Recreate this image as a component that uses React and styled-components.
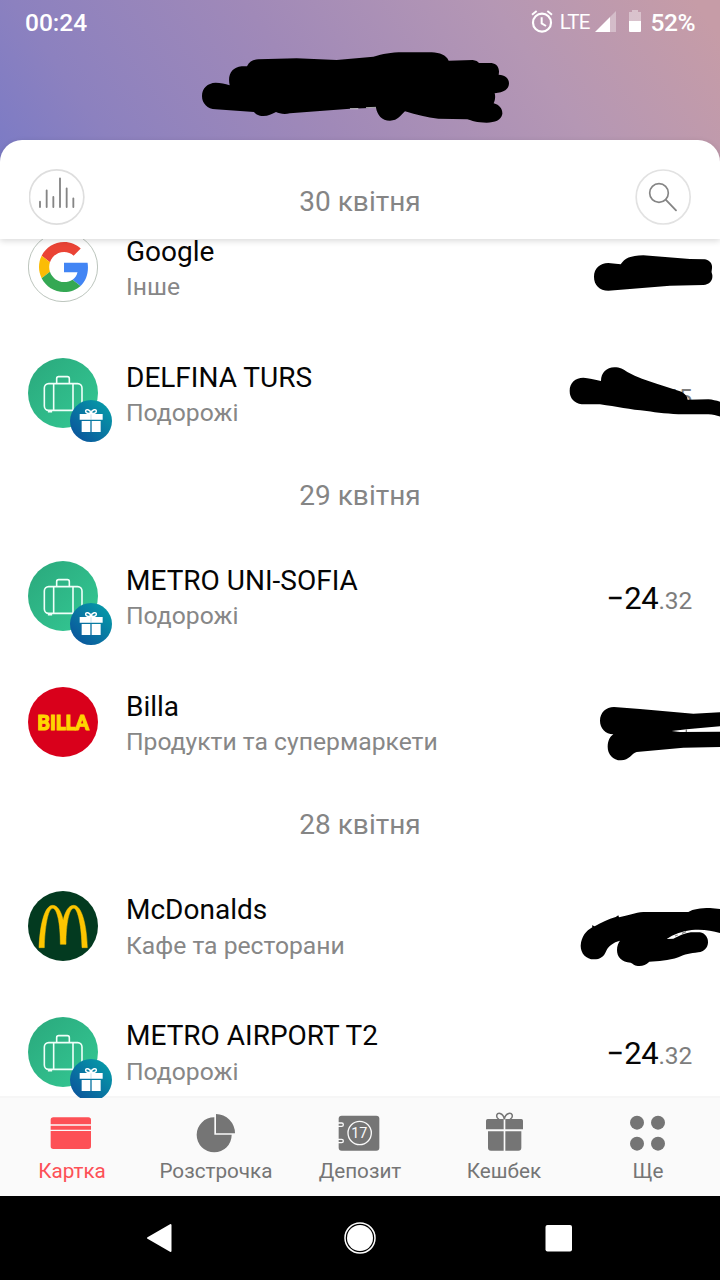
import React from 'react';
import styled, { createGlobalStyle } from 'styled-components';

const GlobalStyle = createGlobalStyle`
  body {
    margin: 0;
    background: #fff;
    font-family: Roboto, 'Noto Sans', sans-serif;
  }
`

const Screen = styled.div`
  position: relative;
  display: flex;
  flex-direction: column;
  width: 720px;
  height: 1280px;
  overflow: hidden;
  background: #fff;
`

const Header = styled.header`
  height: 239px;
  flex: none;
  display: flex;
  flex-direction: column;
  justify-content: space-between;
  background: linear-gradient(55deg, #7c7bc5 3%, #8c81bf 17%, #a089b8 44%, #b597b4 73%, #c69ca7 97%);
  background-size: 720px 190px;
  background-repeat: no-repeat;
`

const StatusBar = styled.div`
  display: flex;
  justify-content: space-between;
  align-items: center;
  height: 44px;
  padding: 0 25px;
  color: #fff;
`

const StatusText = styled.span`
  font-size: 24.5px;
  font-weight: 500;
  line-height: 45px;
`

const StatusIcons = styled.div`
  display: flex;
  align-items: center;
`

const Network = styled.span`
  margin: 0 5px 0 7px;
  font-size: 20.5px;
  letter-spacing: -0.8px;
  line-height: 42px;
`

const Signal = styled.svg`
  margin-right: 12px;
`

const Battery = styled.svg`
  margin-right: 9px;
`

const Percent = styled(StatusText)`
  letter-spacing: -0.5px;
`

const Toolbar = styled.div`
  position: relative;
  z-index: 2;
  display: flex;
  justify-content: space-between;
  align-items: center;
  box-sizing: border-box;
  height: 99px;
  padding: 15px 28.5px 0;
  border-radius: 22px 22px 0 0;
  background: #fff;
  box-shadow: 0 2px 6px rgba(0, 0, 0, 0.15);
`

const RoundButton = styled.button`
  display: block;
  width: 56px;
  height: 56px;
  padding: 0;
  border: 0;
  background: none;
`

const DateText = styled.div`
  color: #858585;
  font-size: 28px;
  text-align: center;
`

const CurrentDate = styled(DateText)`
  padding-top: 8px;
`

const DateRow = styled(DateText)`
  height: 77.35px;
  line-height: 80px;
`

const List = styled.main`
  height: 859px;
  flex: none;
  overflow: hidden;
  background: linear-gradient(to top, #f6f6f6 2px, #fff 2px);
`

const Scrolled = styled.div`
  margin-top: -35px;
`

const Row = styled.div`
  display: flex;
  box-sizing: border-box;
  height: 126px;
  padding: 28px 28px 0;
`

const Avatar = styled.div`
  position: relative;
  width: 70px;
  height: 70px;
  margin-right: 28px;
`

const Badge = styled.svg`
  position: absolute;
  left: 42px;
  top: 42px;
`

const Info = styled.div`
  flex: 1;
`

const Name = styled.div`
  padding-top: 0.6px;
  margin-bottom: -0.6px;
  color: #050505;
  font-size: 28px;
  line-height: 38px;
`

const Category = styled.div`
  color: #878787;
  font-size: 24.7px;
  line-height: 34px;
`

const Amount = styled.div`
  padding-top: 17.6px;
  color: #050505;
  font-size: 31px;
  letter-spacing: -0.2px;
  line-height: 40px;
`

const Cents = styled.span`
  color: #7d7d7d;
  font-size: 24.5px;
  letter-spacing: -0.2px;
`

const Tabs = styled.nav`
  display: flex;
  height: 98px;
  flex: none;
  background: #fafafa;
`

const Tab = styled.div`
  display: flex;
  flex-direction: column;
  align-items: center;
  width: 144px;
  padding-top: 12px;
  box-sizing: border-box;
  color: ${props => props.$active ? '#fd5056' : '#757575'};
`

const TabLabel = styled.span`
  font-size: 20.7px;
  line-height: 26px;
`

const SystemNav = styled.div`
  display: flex;
  justify-content: center;
  align-items: center;
  gap: 168px;
  height: 84px;
  flex: none;
  background: #000;
`

const Scribbles = styled.svg`
  position: absolute;
  left: 0;
  top: 0;
  z-index: 5;
`

const GoogleLogo = () => (
  <svg width="70" height="70" viewBox="0 0 70 70">
    <circle cx="35" cy="35" r="34.6" fill="#fff" stroke="#a9b5ab" strokeWidth=".8" />
    <g transform="translate(11 10) scale(1.042)">
      <path fill="#EA4335" d="M24 9.5c3.54 0 6.71 1.22 9.21 3.6l6.85-6.85C35.9 2.38 30.47 0 24 0 14.62 0 6.51 5.38 2.56 13.22l7.98 6.19C12.43 13.72 17.74 9.5 24 9.5z" />
      <path fill="#4285F4" d="M46.98 24.55c0-1.57-.15-3.09-.38-4.55H24v9.02h12.94c-.58 2.96-2.26 5.48-4.78 7.18l7.73 6c4.51-4.18 7.09-10.36 7.09-17.65z" />
      <path fill="#FBBC05" d="M10.53 28.59c-.48-1.45-.76-2.99-.76-4.59s.27-3.14.76-4.59l-7.98-6.19C.92 16.46 0 20.12 0 24c0 3.88.92 7.54 2.56 10.78l7.97-6.19z" />
      <path fill="#34A853" d="M24 48c6.48 0 11.93-2.13 15.89-5.81l-7.73-6c-2.15 1.45-4.92 2.3-8.16 2.3-6.26 0-11.57-4.22-13.47-9.91l-7.98 6.19C6.51 42.62 14.62 48 24 48z" />
    </g>
  </svg>
)

const TravelLogo = () => (
  <>
    <svg width="70" height="70" viewBox="0 0 210 210">
      <defs>
        <linearGradient id="travel" x1="0" y1="0" x2="1" y2="1">
          <stop offset="0" stopColor="#2aa87c" />
          <stop offset="1" stopColor="#34c994" />
        </linearGradient>
      </defs>
      <circle cx="105" cy="105" r="105" fill="url(#travel)" />
      <g fill="none" stroke="#f0fff9" strokeWidth="4.8">
        <rect x="49" y="77" width="113" height="80" rx="13" />
        <path d="M77 77v80M135 77v80M86 76V62q0-6 6-6h26q6 0 6 6v14M62 158v3h8v-3" />
      </g>
    </svg>
    <Badge width="42" height="42" viewBox="0 0 126 126">
      <defs>
        <linearGradient id="gift" x1="0" y1="1" x2="1" y2="0">
          <stop offset=".1" stopColor="#0b559c" />
          <stop offset=".9" stopColor="#069aa8" />
        </linearGradient>
      </defs>
      <circle cx="63" cy="63" r="63" fill="url(#gift)" />
      <path fill="#fff" d="M29 42h69v17H29zM35 63h26v33H35zM65 63h27v33H65z" />
      <path fill="none" stroke="#fff" strokeWidth="4.5" d="M63 39C60 28 47 26 47 34C47 41 56 41 63 39C70 41 79 41 79 34C79 26 66 28 63 39" />
      <path stroke="#0c7fa3" strokeWidth="2" d="M63 43v16" opacity=".35" />
    </Badge>
  </>
)

const BillaLogo = () => (
  <svg width="70" height="70" viewBox="0 0 70 70">
    <circle cx="35" cy="35" r="35" fill="#d9001b" />
    <text x="9.3" y="42.8" fill="#ffd500" stroke="#ffd500" strokeWidth="1.2" fontFamily="Lato, sans-serif" fontWeight="900" fontSize="20.5" textLength="51.5" lengthAdjust="spacingAndGlyphs">BILLA</text>
  </svg>
)

const McLogo = () => (
  <svg width="70" height="70" viewBox="0 0 210 210">
    <circle cx="105" cy="105" r="105" fill="#033a20" />
    <path fill="#fdc500" stroke="#fdc500" strokeWidth="1.500" d="M33 170C36 100 50 43 74 43C89 43 100 62 105.500 88C111 62 122 43 137 43C161 43 176 100 178 170H162C161 110 150 52 137 52C124 52 114 95 114 160H97C97 95 87 52 74 52C60 52 50 110 49 170Z" />
  </svg>
)

const logos = { google: GoogleLogo, travel: TravelLogo, billa: BillaLogo, mc: McLogo };

const ChartIcon = () => (
  <svg width="56" height="56" viewBox="0 0 168 168" fill="none">
    <circle cx="83" cy="84" r="81.500" stroke="#dedede" strokeWidth="5" />
    <path stroke="#858585" strokeWidth="5.500" strokeLinecap="round" d="M33 98v16M53 64v50M73 84v30M93 28v86M113 58v56M133 88v26" />
  </svg>
)

const SearchIcon = () => (
  <svg width="56" height="56" viewBox="0 0 168 168" fill="none">
    <circle cx="84.500" cy="84" r="81" stroke="#e2e2e2" strokeWidth="5" />
    <circle cx="72" cy="72" r="28" stroke="#858585" strokeWidth="5" />
    <path stroke="#858585" strokeWidth="5.500" strokeLinecap="round" d="M92 92l31 32" />
  </svg>
)

const AlarmIcon = () => (
  <svg width="22" height="24" viewBox="0 0 66 72" fill="none" stroke="#fff">
    <circle cx="33" cy="38" r="27" strokeWidth="6.500" />
    <path strokeWidth="6" d="M32 22v18l13 8M3 14L17 3M49 3l14 11" />
  </svg>
)

const CardIcon = () => (
  <svg width="48" height="48" viewBox="0 0 144 144" fill="currentColor">
    <path d="M8 43V30q0-8 8-8h105q8 0 8 8v13zM8 47h121v12H8zM8 63h121v46q0 8-8 8H16q-8 0-8-8z" />
  </svg>
)

const PieIcon = () => (
  <svg width="48" height="48" viewBox="0 0 144 144" fill="currentColor">
    <path d="M67 22A52.500 52.500 0 1 0 119 74H67zM72 12A58 58 0 0 1 129 70H72z" />
  </svg>
)

const SafeIcon = () => (
  <svg width="48" height="48" viewBox="0 0 144 144">
    <rect x="8" y="17" width="122" height="105" rx="9" fill="currentColor" />
    <g fill="none" stroke="#fafafa" strokeWidth="4">
      <circle cx="71" cy="69" r="35" />
      <path d="M6 39h11q5 0 5 5t-5 5H6M6 88h11q5 0 5 5t-5 5H6" />
    </g>
    <text x="70" y="85" fill="#fafafa" fontSize="43" textAnchor="middle">17</text>
  </svg>
)

const GiftIcon = () => (
  <svg width="48" height="48" viewBox="0 0 144 144" fill="currentColor">
    <path d="M71 27v31H18V32q0-5 5-5zM76 27h48q5 0 5 5v26H76zM24 64h47v58H33q-9 0-9-9zM76 64h48v49q0 9-9 9H76z" />
    <path fill="none" stroke="currentColor" strokeWidth="4.500" d="M73 28C70 7 50 5 50 18C50 22 53 26 57 28M73 28C76 7 97 5 97 18C97 22 94 26 90 28" />
  </svg>
)

const DotsIcon = () => (
  <svg width="48" height="48" viewBox="0 0 144 144" fill="currentColor">
    <circle cx="39" cy="38" r="21" />
    <circle cx="102" cy="38" r="21" />
    <circle cx="39" cy="101" r="21" />
    <circle cx="102" cy="101" r="21" />
  </svg>
)

const tabs = [
  { label: 'Картка', Icon: CardIcon, active: true },
  { label: 'Розстрочка', Icon: PieIcon },
  { label: 'Депозит', Icon: SafeIcon },
  { label: 'Кешбек', Icon: GiftIcon },
  { label: 'Ще', Icon: DotsIcon },
]

const items = [
  { id: 1, logo: 'google', name: 'Google', category: 'Інше' },
  { id: 2, logo: 'travel', name: 'DELFINA TURS', category: 'Подорожі', cents: '.45' },
  { id: 3, date: '29 квітня' },
  { id: 4, logo: 'travel', name: 'METRO UNI-SOFIA', category: 'Подорожі', sum: '−24', cents: '.32' },
  { id: 5, logo: 'billa', name: 'Billa', category: 'Продукти та супермаркети' },
  { id: 6, date: '28 квітня' },
  { id: 7, logo: 'mc', name: 'McDonalds', category: 'Кафе та ресторани' },
  { id: 8, logo: 'travel', name: 'METRO AIRPORT T2', category: 'Подорожі', sum: '−24', cents: '.32' },
]

const Item = ({ item }) => {
  if (item.date) {
    return <DateRow>{item.date}</DateRow>
  }
  const Logo = logos[item.logo];
  return (
    <Row>
      <Avatar><Logo /></Avatar>
      <Info>
        <Name>{item.name}</Name>
        <Category>{item.category}</Category>
      </Info>
      {item.cents && <Amount>{item.sum}<Cents>{item.cents}</Cents></Amount>}
    </Row>
  )
}

// black marker strokes that hide the private numbers
const Marker = () => (
  <Scribbles width="720" height="1280" viewBox="0 0 720 1280">
    <g transform="translate(190 40) scale(.33333)">
      <path d="M36 168C36 145 52 129 77 128C92 128 105 131 119 136C112 105 125 82 155 79L171 79C178 64 190 58 205 58L320 55L440 60L550 50C580 42 600 37 640 37L725 37C750 38 768 45 776 62L848 60Q862 62 867 69L905 69C922 72 930 85 926 104C945 104 957 115 957 130C957 148 942 158 914 160C917 170 915 182 911 190C930 195 938 208 937 222C933 242 915 247 890 248C860 248 845 242 832 238L745 236C710 232 680 225 645 214C632 225 625 242 600 242C575 242 562 225 558 203L480 206L300 220C280 224 268 220 258 216C245 222 235 228 220 228C205 228 197 222 192 216L77 208C52 207 36 190 36 168Z" />
      <path d="M480 206L505 206M528 203L558 202" stroke="#fff" strokeWidth="2" />
    </g>
    <g transform="translate(560 130) scale(.33333)">
      <path d="M102 440C102 415 120 399 145 399L182 403C195 385 210 377 250 376L390 387L435 388C450 392 458 402 456 415Q453 425 457 435C459 452 448 464 430 465L330 467L145 482C118 482 102 465 102 440Z" />
    </g>
    <g transform="translate(550 350) scale(.33333)">
      <path d="M59 123C59 98 76 83 100 83C115 84 135 89 153 93C153 68 170 52 193 52C210 52 220 58 232 66C262 82 290 92 320 101L390 124C405 130 412 140 413 149L475 148C488 149 500 152 512 156L512 200C500 197 490 193 475 193L400 193C360 192 320 188 290 183C240 179 200 170 150 163L95 163C73 160 59 145 59 123Z" />
    </g>
    <g transform="translate(560 570) scale(.33333)">
      <path d="M120 452C120 428 138 411 162 411L240 417L400 431L480 427L480 469L380 478L335 483L360 486L480 485L480 531L370 533L230 546C215 550 208 571 183 571C158 571 143 552 143 530C143 512 150 500 160 493C136 492 120 475 120 452Z" />
      <path d="M379 478v8" stroke="#777" strokeWidth="4" />
    </g>
    <g transform="translate(560 890) scale(.33333)">
      <path d="M62 167C64 140 78 122 97 112L96 106L104 109C125 96 145 88 167 81L175 76L177 82C205 76 225 68 250 66L385 66C400 57 420 54 450 54L480 57L480 129C455 122 430 117 395 120C365 124 340 133 320 147L340 146C365 134 380 127 400 127L420 127C436 130 445 143 444 158C443 173 433 184 415 187C390 190 375 193 355 202C325 212 295 214 268 215C258 224 250 228 238 228C225 228 220 222 212 218C185 216 171 202 171 180C171 168 175 158 180 152C160 157 145 168 139 182C132 200 120 208 102 208C78 208 62 190 62 167Z" />
      <path d="M345 138l8-3M366 130l12-5" stroke="#888" strokeWidth="4" />
    </g>
  </Scribbles>
)

const App = () => {
  return (
    <Screen>
      <GlobalStyle />
      <Header>
        <StatusBar>
          <StatusText>00:24</StatusText>
          <StatusIcons>
            <AlarmIcon />
            <Network>LTE</Network>
            <Signal width="21" height="22" viewBox="0 0 21 22">
              <path fill="#fff" opacity=".35" d="M15 6l6-6v21h-6z" />
              <path fill="#fff" d="M0 21L15 6v15z" />
            </Signal>
            <Battery width="14" height="24" viewBox="0 0 14 24">
              <path fill="#fff" opacity=".4" d="M1 2h3V0h6v2h3v9H1z" />
              <path fill="#fff" d="M1 11h12v10q0 1-1 1H2q-1 0-1-1z" />
            </Battery>
            <Percent>52%</Percent>
          </StatusIcons>
        </StatusBar>
        <Toolbar>
          <RoundButton><ChartIcon /></RoundButton>
          <CurrentDate>30 квітня</CurrentDate>
          <RoundButton><SearchIcon /></RoundButton>
        </Toolbar>
      </Header>
      <List>
        <Scrolled>
          {items.map(item => <Item key={item.id} item={item} />)}
        </Scrolled>
      </List>
      <Tabs>
        {tabs.map(({ label, Icon, active }) => (
          <Tab key={label} $active={active}>
            <Icon />
            <TabLabel>{label}</TabLabel>
          </Tab>
        ))}
      </Tabs>
      <SystemNav>
        <svg width="32" height="32" viewBox="0 0 32 32">
          <path fill="#fff" stroke="#fff" strokeWidth="2" strokeLinejoin="round" d="M4 16L26.500 3v26z" />
        </svg>
        <svg width="32" height="32" viewBox="0 0 32 32">
          <circle cx="16" cy="16" r="15" fill="none" stroke="#fff" strokeWidth="1.500" />
          <circle cx="16" cy="16" r="13" fill="#fff" />
        </svg>
        <svg width="32" height="32" viewBox="0 0 32 32">
          <rect x="1.500" y="3" width="26.500" height="26.500" rx="2" fill="#fff" />
        </svg>
      </SystemNav>
      <Marker />
    </Screen>
  )
}

export default App;
